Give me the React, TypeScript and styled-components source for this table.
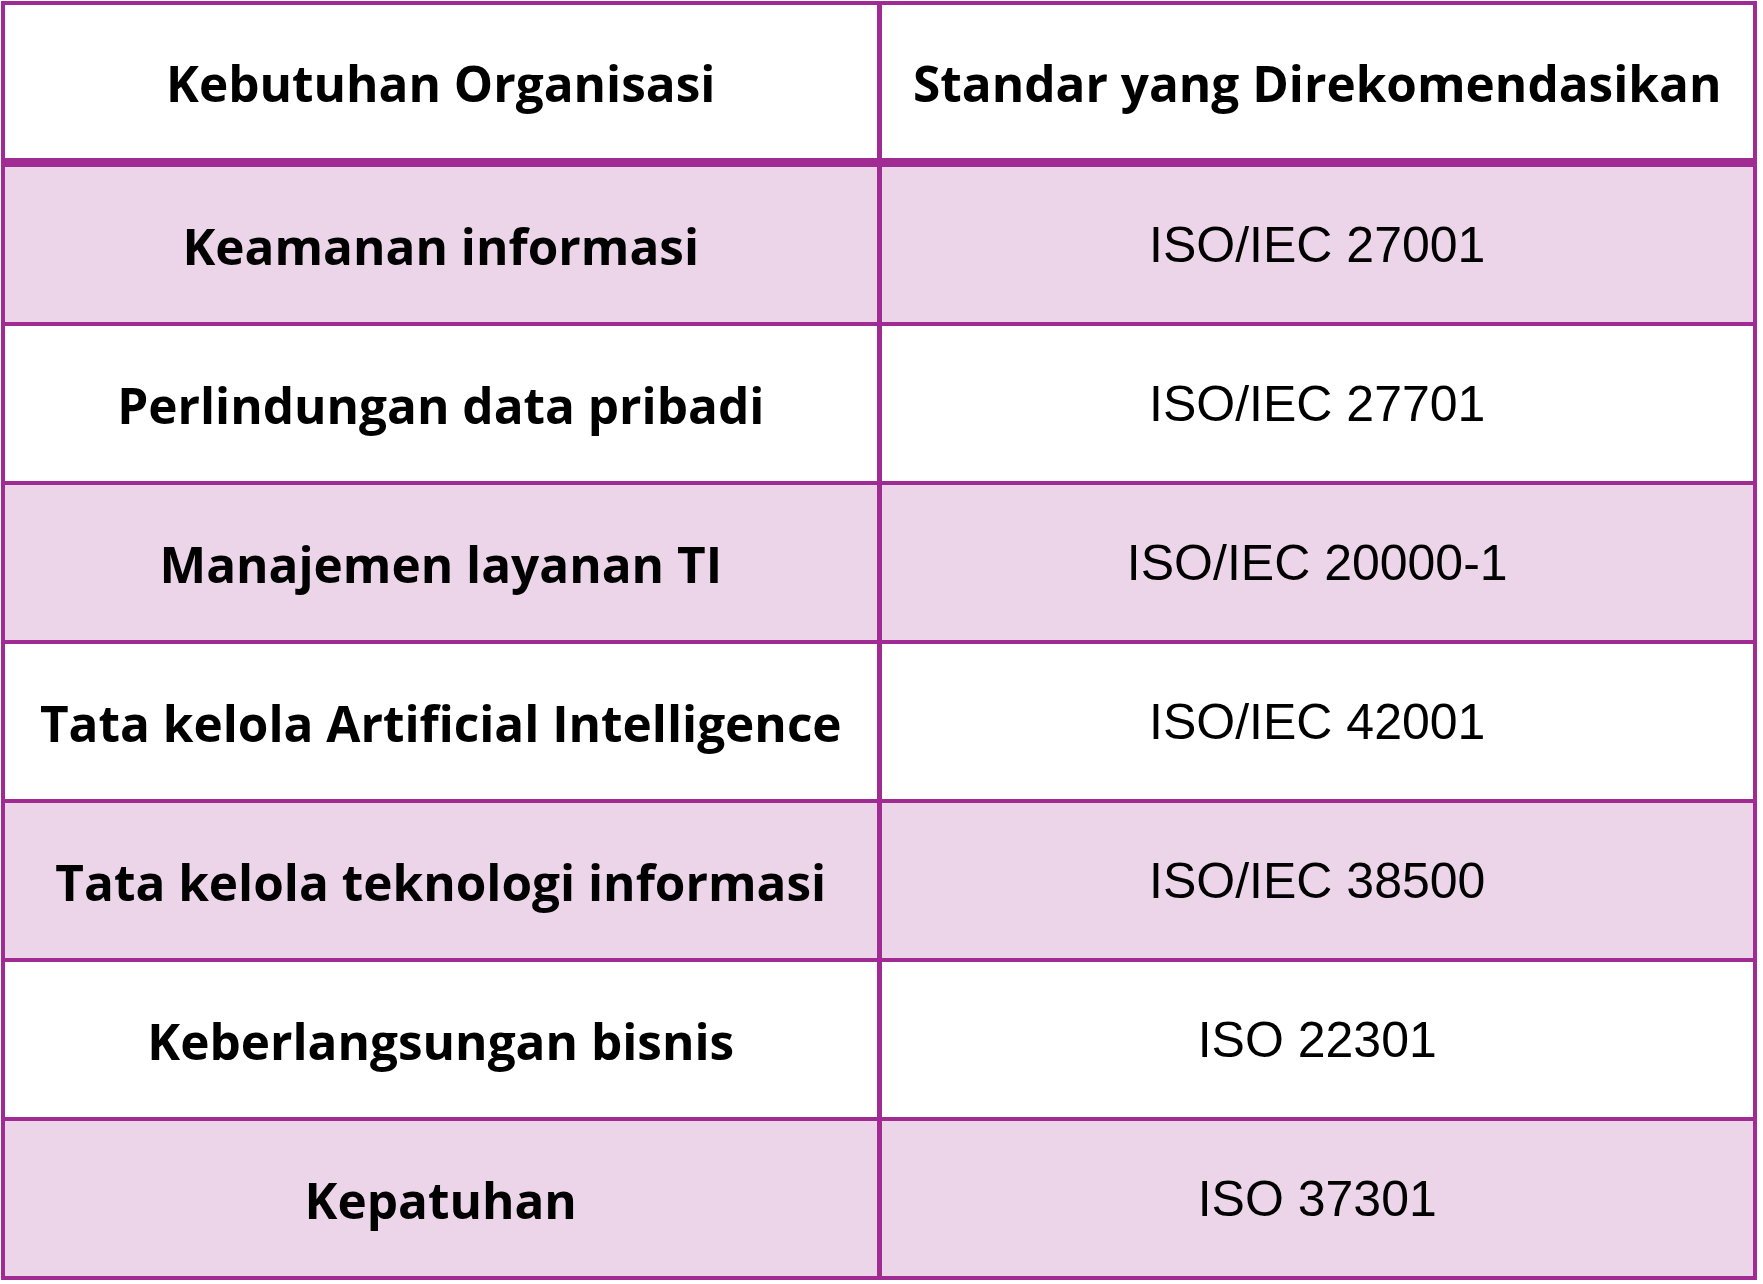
import { Fragment } from 'react';
import styled, { createGlobalStyle } from 'styled-components';

const GlobalStyle = createGlobalStyle`
  html, body {
    margin: 0;
    padding: 0;
    background: #ffffff;
  }
`;

const rows = [
  { need: 'Keamanan informasi', standard: 'ISO/IEC 27001' },
  { need: 'Perlindungan data pribadi', standard: 'ISO/IEC 27701' },
  { need: 'Manajemen layanan TI', standard: 'ISO/IEC 20000-1' },
  { need: 'Tata kelola Artificial Intelligence', standard: 'ISO/IEC 42001' },
  { need: 'Tata kelola teknologi informasi', standard: 'ISO/IEC 38500' },
  { need: 'Keberlangsungan bisnis', standard: 'ISO 22301' },
  { need: 'Kepatuhan', standard: 'ISO 37301' },
];

export default function App() {
  return (
    <>
      <GlobalStyle />
      <Page>
        <Table>
          <HeadCell>Kebutuhan Organisasi</HeadCell>
          <HeadCell>Standar yang Direkomendasikan</HeadCell>
          {rows.map((row, i) => (
            <Fragment key={row.need}>
              <NeedCell $shaded={i % 2 === 0}>{row.need}</NeedCell>
              <StandardCell $shaded={i % 2 === 0}>{row.standard}</StandardCell>
            </Fragment>
          ))}
        </Table>
      </Page>
    </>
  );
}

// 💅 styled-components
const Page = styled.div`
  width: 1763px;
  height: 1284px;
  padding: 1px 6px 0 1px;
  box-sizing: border-box;
  background: #ffffff;
`;

const Table = styled.div`
  display: grid;
  grid-template-columns: 1fr 1fr;
  grid-template-rows: 158px repeat(7, 155px);
  column-gap: 5px;
  row-gap: 4px;
  padding: 4px;
  background: #a02b93;
`;

const Cell = styled.div<{ $shaded?: boolean }>`
  display: flex;
  align-items: center;
  justify-content: center;
  background: ${({ $shaded }) => ($shaded ? '#ecd5e9' : '#ffffff')};
  color: #000000;
  font-size: 50px;
  white-space: nowrap;
`;

const HeadCell = styled(Cell)`
  margin-bottom: 5px;
  font-family: 'Open Sans', 'Liberation Sans', sans-serif;
  font-size: 49.5px;
  font-weight: 700;
  padding-top: 3px;
`;

const NeedCell = styled(Cell)`
  font-family: 'Open Sans', 'Liberation Sans', sans-serif;
  font-size: 49.5px;
  font-weight: 700;
  padding-top: 2px;
`;

const StandardCell = styled(Cell)`
  font-family: 'Liberation Sans', Arial, sans-serif;
  font-weight: 400;
  padding-top: 1px;
`;
